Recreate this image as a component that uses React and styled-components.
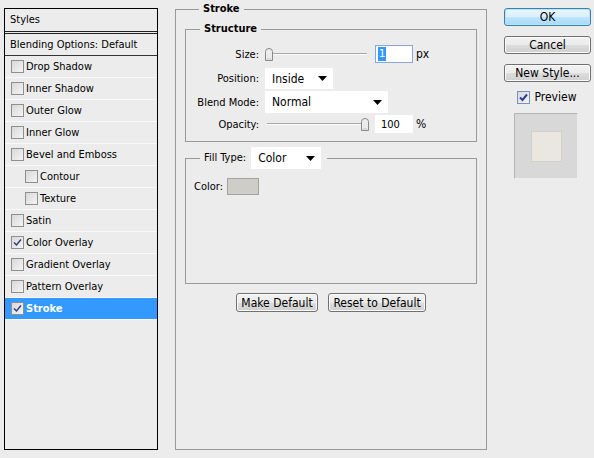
import React from 'react';
import styled, { createGlobalStyle } from 'styled-components';

const GlobalStyle = createGlobalStyle`
    html, body {
        margin: 0;
        background: #ececec;
    }
    body {
        font-family: "DejaVu Sans Condensed", "Liberation Sans", sans-serif;
        font-size: 11px;
        color: #000;
    }
`;

const Dialog = styled.div`
    display: flex;
    align-items: flex-start;
    width: 594px;
    height: 458px;
    padding-left: 4px;
    box-sizing: border-box;
    overflow: hidden;
`;

/* ---- style list on the left ---- */

const StyleList = styled.div`
    width: 154px;
    height: 442px;
    margin-top: 8px;
    border: 1px solid #000;
    box-sizing: border-box;
    display: flex;
    flex-direction: column;
`;

const ListHeader = styled.div`
    height: 22px;
    line-height: 22px;
    padding-left: 5px;
    border-bottom: 3px double #222;
`;

const ListItem = styled.div`
    display: flex;
    align-items: center;
    gap: 2px;
    height: 21px;
    padding-left: ${p => (p.indent ? 20 : 6)}px;
    border-bottom: 1px solid ${p => (p.dark ? '#333' : '#f9f9f9')};
    background: ${p => (p.selected ? '#3399ff' : 'transparent')};
    color: ${p => (p.selected ? '#fff' : '#000')};
    font-weight: ${p => (p.selected ? 'bold' : 'normal')};
`;

const BlendRow = styled(ListItem)`
    padding-left: 5px;
`;

const Box = styled.span`
    display: inline-flex;
    align-items: center;
    justify-content: center;
    width: 13px;
    height: 13px;
    box-sizing: border-box;
    border: 1px solid ${p => (p.blue ? '#7b8fb8' : '#8f8f8f')};
    background: linear-gradient(135deg, #d8d8d8 0%, #f4f4f4 100%);
    flex-shrink: 0;
`;

const Check = ({ checked, bold }) => (
    <Box blue={bold}>
        {checked && (
            <svg width="9" height="9" viewBox="0 0 9 9">
                <path
                    d="M1 4.5 L3.5 7 L8 1.5"
                    fill="none"
                    stroke={bold ? '#2a3f9a' : '#2b3a78'}
                    strokeWidth={bold ? 2 : 1.4}
                />
            </svg>
        )}
    </Box>
);

const styleItems = [
    { label: 'Drop Shadow' },
    { label: 'Inner Shadow' },
    { label: 'Outer Glow' },
    { label: 'Inner Glow' },
    { label: 'Bevel and Emboss' },
    { label: 'Contour', indent: true },
    { label: 'Texture', indent: true },
    { label: 'Satin' },
    { label: 'Color Overlay', checked: true },
    { label: 'Gradient Overlay' },
    { label: 'Pattern Overlay' },
    { label: 'Stroke', checked: true, selected: true },
];

/* ---- group boxes ---- */

const Group = styled.fieldset`
    margin: ${p => p.m || '0'};
    padding: ${p => p.pad || '0'};
    border: 1px solid #999;
    min-width: 0;
    box-sizing: border-box;
    width: ${p => p.w}px;
`;

const Legend = styled.legend`
    margin-left: 14px;
    padding: 0 ${p => p.pr || 4}px 0 4px;
    line-height: 14px;
    font-weight: ${p => (p.bold ? 'bold' : 'normal')};
    display: ${p => (p.row ? 'flex' : 'block')};
    align-items: center;
    gap: 5px;
`;

const FieldGrid = styled.div`
    display: grid;
    grid-template-columns: 73px auto;
    column-gap: 6px;
    align-items: center;
`;

const Label = styled.div`
    text-align: right;
`;

const Controls = styled.div`
    display: flex;
    align-items: center;
    height: ${p => p.h}px;
    margin-top: ${p => p.mt || 0}px;
`;

const LabelCell = styled(Label)`
    margin-top: ${p => p.mt || 0}px;
`;

const Track = styled.div`
    position: relative;
    width: ${p => p.w}px;
    height: 14px;
    display: flex;
    align-items: center;
    &::before {
        content: '';
        position: absolute;
        left: 2px;
        right: 0;
        top: 6px;
        height: 1px;
        background: #a8a8a8;
        border-bottom: 1px solid #fafafa;
    }
`;

const Thumb = styled.svg`
    position: absolute;
    top: 1px;
    left: ${p => p.x}px;
`;

const Slider = ({ w, x }) => (
    <Track w={w}>
        <Thumb x={x} width="8" height="13" viewBox="0 0 8 13">
            <path d="M0.5 3.5 Q0.5 0.5 4 0.5 Q7.5 0.5 7.5 3.5 V12.5 H0.5 Z" fill="#ececec" stroke="#8a8a8a" />
            <path d="M1.5 11 H6.5" stroke="#c8c8c8" />
        </Thumb>
    </Track>
);

const NumberBox = styled.div`
    width: 38px;
    height: 18px;
    box-sizing: border-box;
    margin-left: ${p => p.ml}px;
    background: #fff;
    border: 1px solid ${p => (p.focus ? '#8aa7d8' : '#fff')};
    display: flex;
    align-items: center;
    padding-left: ${p => (p.focus ? 2 : 5)}px;
`;

const Selected = styled.span`
    background: #3399ff;
    color: #fff;
    padding: 0 1px;
    line-height: 14px;
`;

const Unit = styled.span`
    margin-left: 3px;
    font-size: 12px;
`;

const Select = styled.div`
    display: flex;
    align-items: center;
    justify-content: space-between;
    width: ${p => p.w}px;
    height: ${p => p.h || 21}px;
    box-sizing: border-box;
    padding: 0 6px 0 7px;
    background: #fff;
    font-size: 12px;
`;

const Arrow = () => (
    <svg width="9" height="5" viewBox="0 0 9 5">
        <path d="M0 0 H9 L4.5 5 Z" fill="#000" />
    </svg>
);

const ColorRow = styled.div`
    display: flex;
    align-items: center;
    gap: 4px;
    padding-left: 8px;
`;

const Swatch = styled.div`
    width: 32px;
    height: 17px;
    box-sizing: border-box;
    background: #cfcdc8;
    border: 1px solid #a3a3a3;
`;

const ButtonRow = styled.div`
    display: flex;
    justify-content: center;
    gap: 10px;
    margin-top: 9px;
`;

const Button = styled.button`
    font: inherit;
    font-size: 12px;
    color: #000;
    width: ${p => p.w}px;
    height: ${p => p.h || 19}px;
    padding: 0;
    border: 1px solid ${p => (p.primary ? '#3c7fb1' : '#707070')};
    border-radius: 3px;
    background: ${p =>
        p.primary
            ? 'linear-gradient(#eaf6fd 0%, #d9f0fc 50%, #bee6fd 51%, #a7d9f5 100%)'
            : 'linear-gradient(#f2f2f2 0%, #ebebeb 50%, #dddddd 51%, #cfcfcf 100%)'};
    box-shadow: ${p => (p.primary ? 'inset 0 0 0 1px #b6e4fb' : 'inset 0 0 0 1px #fbfbfb')};
`;

/* ---- right column ---- */

const SideColumn = styled.div`
    width: 87px;
    margin-left: 17px;
    margin-top: 8px;
    display: flex;
    flex-direction: column;
    align-items: center;
    gap: 10px;
`;

const PreviewToggle = styled.div`
    display: flex;
    align-items: center;
    gap: 5px;
    margin-top: -2px;
    font-size: 12px;
    margin-left: -2px;
`;

const PreviewBox = styled.div`
    width: 64px;
    height: 66px;
    box-sizing: border-box;
    margin-top: -1px;
    margin-left: -3px;
    background: #d8d8d8;
    border-top: 1px solid #b5b5b5;
    border-left: 1px solid #b5b5b5;
    border-right: 1px solid #ededed;
    border-bottom: 1px solid #ededed;
    display: flex;
    align-items: center;
    justify-content: center;
`;

const PreviewSwatch = styled.div`
    width: 31px;
    height: 31px;
    box-sizing: border-box;
    background: #e9e7df;
    border: 1px solid #d2d0c9;
`;

export default function App() {
    return (
        <>
            <GlobalStyle />
            <Dialog>
                <StyleList>
                    <ListHeader>Styles</ListHeader>
                    <BlendRow dark>Blending Options: Default</BlendRow>
                    {styleItems.map(item => (
                        <ListItem key={item.label} indent={item.indent} selected={item.selected}>
                            <Check checked={item.checked} />
                            {item.label}
                        </ListItem>
                    ))}
                </StyleList>

                <Group w={312} m="2px 0 0 17px" pad="6px 9px 137px 9px">
                    <Legend bold>Stroke</Legend>

                    <Group w={292} pad="9px 0 8px 0">
                        <Legend bold>Structure</Legend>
                        <FieldGrid>
                            <Label>Size:</Label>
                            <Controls h={18}>
                                <Slider w={102} x={0} />
                                <NumberBox focus ml={8}>
                                    <Selected>1</Selected>
                                </NumberBox>
                                <Unit>px</Unit>
                            </Controls>

                            <LabelCell mt={5}>Position:</LabelCell>
                            <Controls h={21} mt={5}>
                                <Select w={68}>
                                    Inside
                                    <Arrow />
                                </Select>
                            </Controls>

                            <LabelCell mt={2}>Blend Mode:</LabelCell>
                            <Controls h={22} mt={2}>
                                <Select w={123} h={22}>
                                    Normal
                                    <Arrow />
                                </Select>
                            </Controls>

                            <LabelCell mt={2}>Opacity:</LabelCell>
                            <Controls h={18} mt={2}>
                                <Slider w={104} x={96} />
                                <NumberBox ml={6}>100</NumberBox>
                                <Unit>%</Unit>
                            </Controls>
                        </FieldGrid>
                    </Group>

                    <Group w={292} m="5px 0 0 0" pad="9px 0 88px 0">
                        <Legend row pr={6}>
                            Fill Type:
                            <Select w={70} h={22}>
                                Color
                                <Arrow />
                            </Select>
                        </Legend>
                        <ColorRow>
                            Color:
                            <Swatch />
                        </ColorRow>
                    </Group>

                    <ButtonRow>
                        <Button w={82}>Make Default</Button>
                        <Button w={98}>Reset to Default</Button>
                    </ButtonRow>
                </Group>

                <SideColumn>
                    <Button primary w={87} h={18}>OK</Button>
                    <Button w={87} h={18}>Cancel</Button>
                    <Button w={87} h={18}>New Style...</Button>
                    <PreviewToggle>
                        <Check checked bold />
                        Preview
                    </PreviewToggle>
                    <PreviewBox>
                        <PreviewSwatch />
                    </PreviewBox>
                </SideColumn>
            </Dialog>
        </>
    );
}
